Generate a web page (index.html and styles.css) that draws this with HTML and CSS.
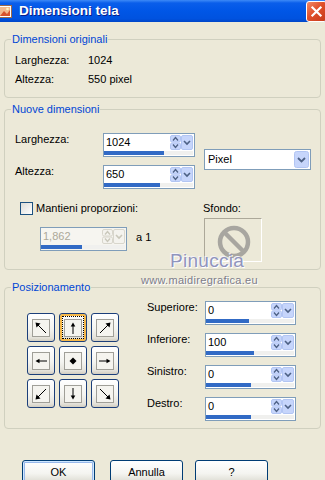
FILE: index.html
```html
<!DOCTYPE html>
<html lang="it">
<head>
  <meta charset="UTF-8" />
  <title>Dimensioni tela</title>
  <link rel="stylesheet" href="styles.css">
</head>
<body>
  <div class="titlebar">
    <svg class="app-icon" viewBox="0 0 16 16" width="16" height="16">
      <rect x="0.5" y="2.5" width="13" height="12" fill="#fff" stroke="#9c6a4a"/>
      <rect x="2" y="4" width="10" height="9" fill="#f3b98c"/>
      <path d="M2 13l4-5 3 3 3-4v6z" fill="#d9532c"/>
      <circle cx="9.5" cy="6" r="1.3" fill="#fff3c0"/>
    </svg>
    <span class="title">Dimensioni tela</span>
    <span class="close">
      <svg viewBox="0 0 21 21" width="21" height="21"><path d="M6 6l9 9M15 6l-9 9" stroke="#fff" stroke-width="2.4" stroke-linecap="square"/></svg>
    </span>
  </div>

  <div class="dialog">
    <fieldset class="group g-orig">
      <legend>Dimensioni originali</legend>
      <div class="info-row"><span class="lbl">Larghezza:</span><span>1024</span></div>
      <div class="info-row"><span class="lbl">Altezza:</span><span>550 pixel</span></div>
    </fieldset>

    <fieldset class="group g-new">
      <legend>Nuove dimensioni</legend>
      <div class="size-block">
        <div class="size-rows">
          <div class="field-row">
            <span class="lbl">Larghezza:</span>
            <div class="spin">
              <div class="spin-top">
                <span class="spin-val">1024</span>
                <svg class="spin-btns" viewBox="0 0 23 15" width="23" height="15">
                  <rect x="0.5" y="0.5" width="10" height="6.5" rx="1.5" fill="#c6d5fb" stroke="#b2c5f3"/>
                  <rect x="0.5" y="8" width="10" height="6.5" rx="1.5" fill="#c6d5fb" stroke="#b2c5f3"/>
                  <path d="M3 5.5l2.5-3 2.5 3M3 9.5l2.5 3 2.5-3" fill="none" stroke="#4d6185" stroke-width="1.3"/>
                  <rect x="11.5" y="0.5" width="11" height="14" rx="1.5" fill="#c6d5fb" stroke="#b2c5f3"/>
                  <path d="M14 6l3 3 3-3" fill="none" stroke="#4d6185" stroke-width="1.6"/>
                </svg>
              </div>
              <div class="bar"><i style="width:60px"></i></div>
            </div>
          </div>
          <div class="field-row">
            <span class="lbl">Altezza:</span>
            <div class="spin">
              <div class="spin-top">
                <span class="spin-val">650</span>
                <svg class="spin-btns" viewBox="0 0 23 15" width="23" height="15">
                  <rect x="0.5" y="0.5" width="10" height="6.5" rx="1.5" fill="#c6d5fb" stroke="#b2c5f3"/>
                  <rect x="0.5" y="8" width="10" height="6.5" rx="1.5" fill="#c6d5fb" stroke="#b2c5f3"/>
                  <path d="M3 5.5l2.5-3 2.5 3M3 9.5l2.5 3 2.5-3" fill="none" stroke="#4d6185" stroke-width="1.3"/>
                  <rect x="11.5" y="0.5" width="11" height="14" rx="1.5" fill="#c6d5fb" stroke="#b2c5f3"/>
                  <path d="M14 6l3 3 3-3" fill="none" stroke="#4d6185" stroke-width="1.6"/>
                </svg>
              </div>
              <div class="bar"><i style="width:56px"></i></div>
            </div>
          </div>
        </div>
        <div class="select">
          <span>Pixel</span>
          <svg viewBox="0 0 15 17" width="15" height="17">
            <rect x="0.5" y="0.5" width="14" height="16" rx="2" fill="#c6d5fb" stroke="#b2c5f3"/>
            <path d="M4 7l3.5 3.5 3.5-3.5" fill="none" stroke="#4d6185" stroke-width="1.8"/>
          </svg>
        </div>
      </div>

      <div class="prop-block">
        <div class="prop-left">
          <label class="check"><span class="box"></span>Mantieni proporzioni:</label>
          <div class="ratio-row">
            <div class="spin disabled">
              <div class="spin-top">
                <span class="spin-val">1,862</span>
                <svg class="spin-btns" viewBox="0 0 23 15" width="23" height="15">
                  <rect x="0.5" y="0.5" width="10" height="6.5" rx="1.5" fill="#f4f3ee" stroke="#d8d6cc"/>
                  <rect x="0.5" y="8" width="10" height="6.5" rx="1.5" fill="#f4f3ee" stroke="#d8d6cc"/>
                  <path d="M3 5.5l2.5-3 2.5 3M3 9.5l2.5 3 2.5-3" fill="none" stroke="#c9c7ba" stroke-width="1.3"/>
                  <rect x="11.5" y="0.5" width="11" height="14" rx="1.5" fill="#f4f3ee" stroke="#d8d6cc"/>
                  <path d="M14 6l3 3 3-3" fill="none" stroke="#c9c7ba" stroke-width="1.6"/>
                </svg>
              </div>
              <div class="bar"><i style="width:41px"></i></div>
            </div>
            <span class="ratio-tail">a 1</span>
          </div>
        </div>
        <div class="bg-col">
          <span>Sfondo:</span>
          <div class="bg-box">
            <svg viewBox="0 0 42 42" width="42" height="42">
              <circle cx="21" cy="21" r="14" fill="none" stroke="#a8a6a0" stroke-width="4.5"/>
              <path d="M11 11l20 20" stroke="#a8a6a0" stroke-width="4.5"/>
            </svg>
          </div>
        </div>
      </div>
    </fieldset>

    <fieldset class="group g-pos">
      <legend>Posizionamento</legend>
      <div class="pos-block">
        <div class="arrows">
          <button class="arrow-btn"><svg viewBox="0 0 18 18" width="18" height="18"><rect class="frame" x="0.5" y="0.5" width="17" height="17"/><path class="shaft" d="M14 14L5 5"/><path d="M3.5 3.5l5 1-4 4z"/></svg></button>
          <button class="arrow-btn focused"><svg viewBox="0 0 18 18" width="18" height="18"><rect class="frame" x="0.5" y="0.5" width="17" height="17"/><path class="shaft" d="M9 15V6"/><path d="M9 3.5l-2.3 4h4.6z"/></svg></button>
          <button class="arrow-btn"><svg viewBox="0 0 18 18" width="18" height="18"><rect class="frame" x="0.5" y="0.5" width="17" height="17"/><path class="shaft" d="M4 14L13 5"/><path d="M14.5 3.5l-5 1 4 4z"/></svg></button>
          <button class="arrow-btn"><svg viewBox="0 0 18 18" width="18" height="18"><rect class="frame" x="0.5" y="0.5" width="17" height="17"/><path class="shaft" d="M15 9H6"/><path d="M3.5 9l4-2.3v4.6z"/></svg></button>
          <button class="arrow-btn"><svg viewBox="0 0 18 18" width="18" height="18"><rect class="frame" x="0.5" y="0.5" width="17" height="17"/><path d="M9 5.5l3.5 3.5-3.5 3.5-3.5-3.5z"/></svg></button>
          <button class="arrow-btn"><svg viewBox="0 0 18 18" width="18" height="18"><rect class="frame" x="0.5" y="0.5" width="17" height="17"/><path class="shaft" d="M3 9h9"/><path d="M14.5 9l-4-2.3v4.6z"/></svg></button>
          <button class="arrow-btn"><svg viewBox="0 0 18 18" width="18" height="18"><rect class="frame" x="0.5" y="0.5" width="17" height="17"/><path class="shaft" d="M14 4L5 13"/><path d="M3.5 14.5l1-5 4 4z"/></svg></button>
          <button class="arrow-btn"><svg viewBox="0 0 18 18" width="18" height="18"><rect class="frame" x="0.5" y="0.5" width="17" height="17"/><path class="shaft" d="M9 3v9"/><path d="M9 14.5l-2.3-4h4.6z"/></svg></button>
          <button class="arrow-btn"><svg viewBox="0 0 18 18" width="18" height="18"><rect class="frame" x="0.5" y="0.5" width="17" height="17"/><path class="shaft" d="M4 4l9 9"/><path d="M14.5 14.5l-1-5-4 4z"/></svg></button>
        </div>

        <div class="offsets">
          <div class="field-row">
            <span class="lbl">Superiore:</span>
            <div class="spin narrow">
              <div class="spin-top">
                <span class="spin-val">0</span>
                <svg class="spin-btns" viewBox="0 0 23 15" width="23" height="15">
                  <rect x="0.5" y="0.5" width="10" height="6.5" rx="1.5" fill="#c6d5fb" stroke="#b2c5f3"/>
                  <rect x="0.5" y="8" width="10" height="6.5" rx="1.5" fill="#c6d5fb" stroke="#b2c5f3"/>
                  <path d="M3 5.5l2.5-3 2.5 3M3 9.5l2.5 3 2.5-3" fill="none" stroke="#4d6185" stroke-width="1.3"/>
                  <rect x="11.5" y="0.5" width="11" height="14" rx="1.5" fill="#c6d5fb" stroke="#b2c5f3"/>
                  <path d="M14 6l3 3 3-3" fill="none" stroke="#4d6185" stroke-width="1.6"/>
                </svg>
              </div>
              <div class="bar"><i style="width:43px"></i></div>
            </div>
          </div>
          <div class="field-row">
            <span class="lbl">Inferiore:</span>
            <div class="spin narrow">
              <div class="spin-top">
                <span class="spin-val">100</span>
                <svg class="spin-btns" viewBox="0 0 23 15" width="23" height="15">
                  <rect x="0.5" y="0.5" width="10" height="6.5" rx="1.5" fill="#c6d5fb" stroke="#b2c5f3"/>
                  <rect x="0.5" y="8" width="10" height="6.5" rx="1.5" fill="#c6d5fb" stroke="#b2c5f3"/>
                  <path d="M3 5.5l2.5-3 2.5 3M3 9.5l2.5 3 2.5-3" fill="none" stroke="#4d6185" stroke-width="1.3"/>
                  <rect x="11.5" y="0.5" width="11" height="14" rx="1.5" fill="#c6d5fb" stroke="#b2c5f3"/>
                  <path d="M14 6l3 3 3-3" fill="none" stroke="#4d6185" stroke-width="1.6"/>
                </svg>
              </div>
              <div class="bar"><i style="width:48px"></i></div>
            </div>
          </div>
          <div class="field-row">
            <span class="lbl">Sinistro:</span>
            <div class="spin narrow">
              <div class="spin-top">
                <span class="spin-val">0</span>
                <svg class="spin-btns" viewBox="0 0 23 15" width="23" height="15">
                  <rect x="0.5" y="0.5" width="10" height="6.5" rx="1.5" fill="#c6d5fb" stroke="#b2c5f3"/>
                  <rect x="0.5" y="8" width="10" height="6.5" rx="1.5" fill="#c6d5fb" stroke="#b2c5f3"/>
                  <path d="M3 5.5l2.5-3 2.5 3M3 9.5l2.5 3 2.5-3" fill="none" stroke="#4d6185" stroke-width="1.3"/>
                  <rect x="11.5" y="0.5" width="11" height="14" rx="1.5" fill="#c6d5fb" stroke="#b2c5f3"/>
                  <path d="M14 6l3 3 3-3" fill="none" stroke="#4d6185" stroke-width="1.6"/>
                </svg>
              </div>
              <div class="bar"><i style="width:45px"></i></div>
            </div>
          </div>
          <div class="field-row">
            <span class="lbl">Destro:</span>
            <div class="spin narrow">
              <div class="spin-top">
                <span class="spin-val">0</span>
                <svg class="spin-btns" viewBox="0 0 23 15" width="23" height="15">
                  <rect x="0.5" y="0.5" width="10" height="6.5" rx="1.5" fill="#c6d5fb" stroke="#b2c5f3"/>
                  <rect x="0.5" y="8" width="10" height="6.5" rx="1.5" fill="#c6d5fb" stroke="#b2c5f3"/>
                  <path d="M3 5.5l2.5-3 2.5 3M3 9.5l2.5 3 2.5-3" fill="none" stroke="#4d6185" stroke-width="1.3"/>
                  <rect x="11.5" y="0.5" width="11" height="14" rx="1.5" fill="#c6d5fb" stroke="#b2c5f3"/>
                  <path d="M14 6l3 3 3-3" fill="none" stroke="#4d6185" stroke-width="1.6"/>
                </svg>
              </div>
              <div class="bar"><i style="width:45px"></i></div>
            </div>
          </div>
        </div>
      </div>
    </fieldset>

    <div class="buttons">
      <button class="btn default">OK</button>
      <button class="btn">Annulla</button>
      <button class="btn">?</button>
    </div>

    <!-- firma sopra il dialogo -->
    <div class="wm-name">Pinuccia</div>
    <div class="wm-site">www.maidiregrafica.eu</div>
  </div>
</body>
</html>
```

FILE: styles.css
```css
body { margin: 0; background: #ece9d8; font: 11px/13px "Liberation Sans", Arial, sans-serif; color: #000; overflow: hidden; }

.titlebar { height: 22px; display: flex; align-items: center; overflow: hidden; color: #fff;
  background: linear-gradient(#3d8af7 0, #0a5eea 3px, #0056e6 50%, #0052df 85%, #0046c8 100%); }
.app-icon { margin-left: -2px; flex: none; }
.title { margin-left: 5px; font: bold 13.5px/16px "Liberation Sans", Arial, sans-serif; text-shadow: 1px 1px 0 #0a1e8a; }
.close { margin-left: auto; margin-right: -2px; width: 21px; height: 21px; box-sizing: border-box; border: 1px solid #fff; border-radius: 3px;
  background: linear-gradient(135deg, #f08a67, #e0502b 45%, #c53a1b); display: flex; align-items: center; justify-content: center; }
.close svg { width: 19px; height: 19px; }

.dialog { position: relative; }

.group { margin: 0 4px; padding: 0 0 0 6px; border: 1px solid #d0d0bf; border-radius: 4px; min-width: 0; }
.group legend { padding: 0 1px; color: #0046d5; line-height: 13px; }

.g-orig { margin-top: 11px; padding-top: 5px; padding-bottom: 8px; }
.info-row { display: flex; align-items: center; height: 19px; margin-left: 4px; }
.info-row .lbl { width: 73px; }

.g-new { margin-top: 5px; padding-top: 17px; padding-bottom: 7px; }
.size-block { display: flex; }
.size-rows { width: 192px; }
.field-row { display: flex; align-items: flex-start; margin-left: 4px; }
.field-row + .field-row { margin-top: 8px; }
.field-row .lbl { width: 88px; }

.spin { box-sizing: border-box; width: 92px; height: 24px; border: 1px solid #7f9db9; background: #fff; padding: 1px 1px 1px 0; }
.spin.narrow { width: 91px; }
.spin-top { display: flex; align-items: center; height: 15px; }
.spin-val { flex: 1; padding-left: 2px; }
.spin-btns { flex: none; }
.bar { height: 4px; margin-top: 1px; background: #f0f0ee; }
.bar i { display: block; height: 100%; background: #316ac5; }
.spin.disabled { width: 87px; background: #f6f5f0; color: #aca899; }

.select { display: flex; align-items: center; box-sizing: border-box; width: 107px; height: 21px; margin: 16px 0 0 1px;
  border: 1px solid #7f9db9; background: #fff; padding: 1px; }
.select span { flex: 1; padding-left: 2px; }

.prop-block { display: flex; margin-top: 13px; }
.prop-left { width: 192px; }
.check { display: flex; align-items: center; gap: 3px; margin-left: 9px; }
.check .box { width: 13px; height: 13px; box-sizing: border-box; border: 1px solid #1c5180; background: linear-gradient(135deg, #dcdcd7, #fff); }
.ratio-row { display: flex; align-items: center; margin: 12px 0 0 29px; }
.ratio-tail { margin-left: 9px; margin-top: -3px; }
.bg-box { width: 58px; height: 44px; box-sizing: border-box; margin: 3px 0 0 1px; border: 1px solid; border-color: #aca899 #fff #fff #aca899;
  display: flex; align-items: center; justify-content: center; }
.bg-box svg { margin: 4px 0 0 2px; }

.g-pos { margin-top: 11px; padding-top: 7px; padding-bottom: 7px; }
.pos-block { display: flex; }
.arrows { display: grid; grid-template-columns: repeat(3, 28px); grid-auto-rows: 29px; gap: 4px; margin: 12px 0 0 16px; }
.arrow-btn { box-sizing: border-box; width: 28px; height: 29px; padding: 0; border: 1px solid #1c3f7a; border-radius: 3px;
  background: linear-gradient(#fff, #f4f4f0 55%, #e4e2da 88%, #d2cdc0); display: flex; align-items: center; justify-content: center; }
.arrow-btn svg { margin-top: 1px; }
.arrow-btn .frame { fill: #f5f4ef; stroke: #a09f98; }
.arrow-btn .shaft { stroke: #000; stroke-width: 1; fill: none; }
.arrow-btn path { fill: #000; }
.arrow-btn.focused { box-shadow: inset 0 0 0 2px #f6b94a; outline: 1px dotted #000; outline-offset: -4px; }
.offsets { margin-left: 28px; }
.offsets .field-row { margin-left: 0; }
.offsets .lbl { width: 58px; }

.buttons { display: flex; margin: 31px 0 0 22px; }
.btn { box-sizing: border-box; width: 73px; height: 23px; padding: 0; border: 1px solid #003c74; border-radius: 3px;
  font: 11px "Liberation Sans", Arial, sans-serif; color: #000;
  background: linear-gradient(#fff, #f4f4f0 60%, #e3e2da 90%, #d6d0c5); }
.btn + .btn { margin-left: 15px; }
.btn + .btn + .btn { margin-left: 12px; }
.btn.default { box-shadow: inset 0 0 0 1px #cee7ff, inset 0 0 0 2px #98b8ea; }

.wm-name { position: absolute; left: 170px; top: 217px; font: 19px/22px "Liberation Sans", Arial, sans-serif; color: #9094bd;
  text-shadow: 1px 1px 0 #fff, -1px -1px 0 #f4f4fa; letter-spacing: 0.3px; }
.wm-site { position: absolute; left: 141px; top: 241px; font: 11px/13px "Liberation Sans", Arial, sans-serif; color: #7d7d8a;
  text-shadow: 1px 1px 0 #fff; letter-spacing: 0.3px; }
```
